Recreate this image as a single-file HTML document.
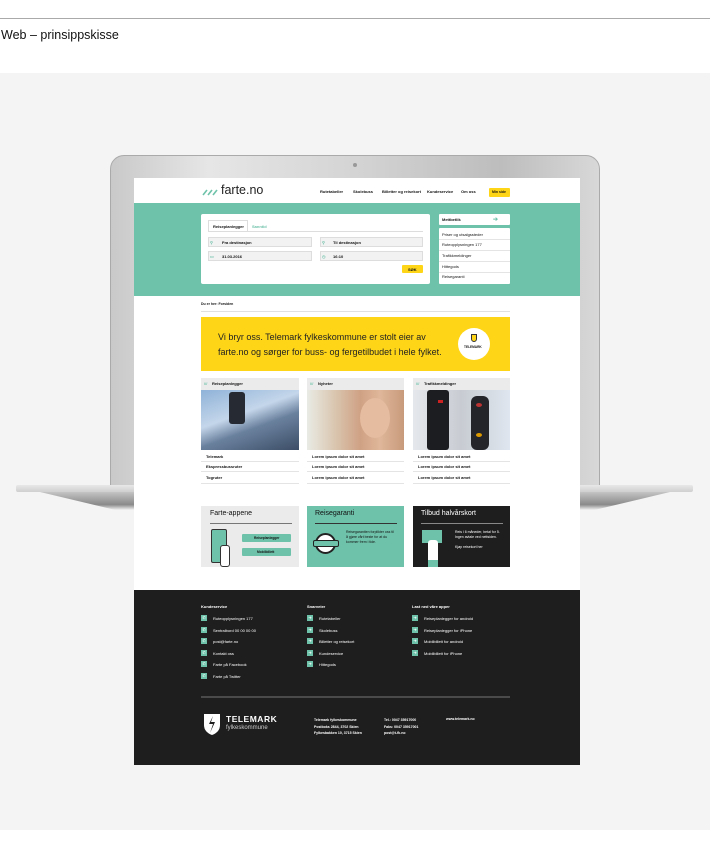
<!DOCTYPE html>
<html><head><meta charset="utf-8"><style>
*{margin:0;padding:0;box-sizing:border-box}
body{width:710px;height:850px;background:#fff;font-family:"Liberation Sans",sans-serif;position:relative;overflow:hidden;color:#111}
.a{position:absolute}
.t{font-size:4px;font-weight:bold;white-space:nowrap}
</style></head><body>
<div class="a" style="left:0;top:18px;width:710px;height:1px;background:#aaa"></div>
<div class="a" style="left:1px;top:28px;font-size:12.5px;color:#111">Web – prinsippskisse</div>
<div class="a" style="left:0;top:73px;width:710px;height:757px;background:#f4f4f4"></div>
<div class="a" style="left:110px;top:155px;width:490px;height:333px;border-radius:14px 14px 0 0;background:linear-gradient(90deg,#c9c9c9,#e6e6e6 20%,#d4d4d4 50%,#bdbdbd 80%,#d8d8d8);border:1px solid #aaa"></div>
<div class="a" style="left:353px;top:163px;width:4px;height:4px;border-radius:50%;background:#999"></div>
<div class="a" style="left:16px;top:485px;width:677px;height:7px;background:linear-gradient(#e8e8e8,#cfcfcf);border-radius:2px"></div>
<div class="a" style="left:40px;top:492px;width:630px;height:18px;background:linear-gradient(#c4c4c4,#8a8a8a 70%,#f4f4f4);clip-path:polygon(0 0,100% 0,88% 100%,12% 100%)"></div>
<div class="a" style="left:134px;top:178px;width:446px;height:587px;background:#fff"></div>
<svg class="a" style="left:202px;top:188px" width="18" height="8"><g stroke="#6fc2aa" stroke-width="1.6"><line x1="1" y1="7" x2="5" y2="2"/><line x1="6" y1="7" x2="10" y2="2"/><line x1="11" y1="7" x2="15" y2="2"/></g></svg>
<div class="a" style="left:221px;top:183px;font-size:12.5px;color:#222">farte.no</div>
<div class="a t" style="left:320px;top:189px">Rutetabeller</div>
<div class="a t" style="left:353px;top:189px">Skolebuss</div>
<div class="a t" style="left:382px;top:189px">Billetter og reisekort</div>
<div class="a t" style="left:427px;top:189px">Kundeservice</div>
<div class="a t" style="left:461px;top:189px">Om oss</div>
<div class="a" style="left:489px;top:188px;width:21px;height:9px;background:#ffd617;border-radius:1px"></div>
<div class="a t" style="left:492px;top:190px;font-size:3.5px">Min side</div>
<div class="a" style="left:134px;top:203px;width:446px;height:93px;background:#6fc2aa"></div>
<div class="a" style="left:201px;top:214px;width:229px;height:70px;background:#fff;border-radius:2px"></div>
<div class="a" style="left:208px;top:220px;width:40px;height:11px;border:1px solid #ddd;border-bottom:none;background:#fff"></div>
<div class="a t" style="left:213px;top:224px">Reiseplanlegger</div>
<div class="a t" style="left:252px;top:224px;color:#6fc2aa">Sanntid</div>
<div class="a" style="left:208px;top:231px;width:215px;height:1px;background:#ddd"></div>
<div class="a" style="left:208px;top:237px;width:104px;height:10px;background:#f2f2f2;border:1px solid #ddd"></div>
<div class="a" style="left:320px;top:237px;width:103px;height:10px;background:#f2f2f2;border:1px solid #ddd"></div>
<div class="a" style="left:208px;top:251px;width:104px;height:10px;background:#f2f2f2;border:1px solid #ddd"></div>
<div class="a" style="left:320px;top:251px;width:103px;height:10px;background:#f2f2f2;border:1px solid #ddd"></div>
<div class="a t" style="left:210px;top:240px;color:#6fc2aa">⚲</div><div class="a t" style="left:222px;top:240px">Fra destinasjon</div>
<div class="a t" style="left:322px;top:240px;color:#6fc2aa">⚲</div><div class="a t" style="left:333px;top:240px">Til destinasjon</div>
<div class="a t" style="left:210px;top:254px;color:#6fc2aa">▭</div><div class="a t" style="left:222px;top:254px">31.03.2016</div>
<div class="a t" style="left:322px;top:254px;color:#6fc2aa">◷</div><div class="a t" style="left:333px;top:254px">16:10</div>
<div class="a" style="left:402px;top:265px;width:21px;height:8px;background:#ffd617;border-radius:1px"></div>
<div class="a t" style="left:408px;top:267px">SØK</div>
<div class="a" style="left:439px;top:214px;width:71px;height:11px;background:#fff;border-radius:1px"></div>
<div class="a t" style="left:442px;top:217px">Mettbetlik</div>
<div class="a t" style="left:493px;top:216px;color:#6fc2aa;font-size:6px">➔</div>
<div class="a" style="left:439px;top:228px;width:71px;height:56px;background:#fff;border-radius:1px"></div>
<div class="a t" style="left:442px;top:232px;font-weight:normal">Priser og utsalgssteder</div>
<div class="a t" style="left:442px;top:242px;font-weight:normal">Ruteopplysningen 177</div>
<div class="a t" style="left:442px;top:253px;font-weight:normal">Trafikkmeldinger</div>
<div class="a t" style="left:442px;top:264px;font-weight:normal">Hittegods</div>
<div class="a t" style="left:442px;top:274px;font-weight:normal">Reisegaranti</div>
<div class="a" style="left:439px;top:239px;width:71px;height:1px;background:#e4e4e4"></div>
<div class="a" style="left:439px;top:250px;width:71px;height:1px;background:#e4e4e4"></div>
<div class="a" style="left:439px;top:261px;width:71px;height:1px;background:#e4e4e4"></div>
<div class="a" style="left:439px;top:272px;width:71px;height:1px;background:#e4e4e4"></div>
<div class="a t" style="left:201px;top:302px;font-size:3.5px">Du er her: Forsiden</div>
<div class="a" style="left:201px;top:311px;width:309px;height:1px;background:#e0e0e0"></div>
<div class="a" style="left:201px;top:317px;width:309px;height:54px;background:#ffd617"></div>
<div class="a" style="left:218px;top:330px;font-size:9px;line-height:15px;color:#222;white-space:nowrap">Vi bryr oss. Telemark fylkeskommune er stolt eier av<br>farte.no og sørger for buss- og fergetilbudet i hele fylket.</div>
<div class="a" style="left:458px;top:328px;width:32px;height:32px;border-radius:50%;background:#fff"></div>
<div class="a" style="left:471px;top:334px;width:6px;height:8px;background:#ffd617;border:1px solid #333;border-radius:0 0 3px 3px"></div>
<div class="a" style="left:464px;top:345px;font-size:3.2px;font-weight:bold">TELEMARK</div>
<div class="a" style="left:201px;top:378px;width:98px;height:12px;background:#ebebeb"></div>
<div class="a" style="left:307px;top:378px;width:97px;height:12px;background:#ebebeb"></div>
<div class="a" style="left:413px;top:378px;width:97px;height:12px;background:#ebebeb"></div>
<div class="a t" style="left:204px;top:381px;color:#6fc2aa">///</div><div class="a t" style="left:212px;top:381px">Reiseplanlegger</div>
<div class="a t" style="left:310px;top:381px;color:#6fc2aa">///</div><div class="a t" style="left:318px;top:381px">Nyheter</div>
<div class="a t" style="left:416px;top:381px;color:#6fc2aa">///</div><div class="a t" style="left:424px;top:381px">Trafikkmeldinger</div>
<div class="a" style="left:201px;top:390px;width:98px;height:60px;background:linear-gradient(160deg,#8fb2d8,#c4d6ea 40%,#6a819e 60%,#3c4d66)"></div>
<div class="a" style="left:229px;top:392px;width:16px;height:32px;background:#252a33;border-radius:3px"></div>
<div class="a" style="left:307px;top:390px;width:97px;height:60px;background:linear-gradient(90deg,#e9ebe5,#d9c4ad 30%,#cfa184 55%,#e0b79a 75%,#c79a7b)"></div>
<div class="a" style="left:360px;top:398px;width:30px;height:40px;border-radius:50%;background:#e5bca0"></div>
<div class="a" style="left:413px;top:390px;width:97px;height:60px;background:linear-gradient(90deg,#e5e8ec,#c8ccd2 50%,#dfe6ef)"></div>
<div class="a" style="left:427px;top:390px;width:22px;height:60px;background:#1c1d20;border-radius:3px"></div>
<div class="a" style="left:471px;top:396px;width:18px;height:54px;background:#23252a;border-radius:6px"></div>
<div class="a" style="left:438px;top:400px;width:5px;height:3px;background:#c22"></div>
<div class="a" style="left:476px;top:403px;width:6px;height:4px;background:#b33;border-radius:50%"></div>
<div class="a" style="left:476px;top:433px;width:6px;height:4px;background:#d90;border-radius:50%"></div>
<div class="a t" style="left:206px;top:454px">Telemark</div>
<div class="a t" style="left:206px;top:464px">Ekspressbussruter</div>
<div class="a t" style="left:206px;top:475px">Togruter</div>
<div class="a t" style="left:312px;top:454px">Lorem ipsum dolor sit amet</div>
<div class="a t" style="left:312px;top:464px">Lorem ipsum dolor sit amet</div>
<div class="a t" style="left:312px;top:475px">Lorem ipsum dolor sit amet</div>
<div class="a t" style="left:418px;top:454px">Lorem ipsum dolor sit amet</div>
<div class="a t" style="left:418px;top:464px">Lorem ipsum dolor sit amet</div>
<div class="a t" style="left:418px;top:475px">Lorem ipsum dolor sit amet</div>
<div class="a" style="left:201px;top:461px;width:98px;height:1px;background:#e4e4e4"></div>
<div class="a" style="left:201px;top:471px;width:98px;height:1px;background:#e4e4e4"></div>
<div class="a" style="left:201px;top:483px;width:98px;height:1px;background:#e4e4e4"></div>
<div class="a" style="left:307px;top:461px;width:97px;height:1px;background:#e4e4e4"></div>
<div class="a" style="left:307px;top:471px;width:97px;height:1px;background:#e4e4e4"></div>
<div class="a" style="left:307px;top:483px;width:97px;height:1px;background:#e4e4e4"></div>
<div class="a" style="left:413px;top:461px;width:97px;height:1px;background:#e4e4e4"></div>
<div class="a" style="left:413px;top:471px;width:97px;height:1px;background:#e4e4e4"></div>
<div class="a" style="left:413px;top:483px;width:97px;height:1px;background:#e4e4e4"></div>
<div class="a" style="left:201px;top:506px;width:98px;height:61px;background:#ebebeb"></div>
<div class="a" style="left:307px;top:506px;width:97px;height:61px;background:#6fc2aa"></div>
<div class="a" style="left:413px;top:506px;width:97px;height:61px;background:#1e1e1e"></div>
<div class="a" style="left:210px;top:510px;font-size:7px">Farte-appene</div>
<div class="a" style="left:315px;top:510px;font-size:7px">Reisegaranti</div>
<div class="a" style="left:421px;top:510px;font-size:7px;color:#fff">Tilbud halvårskort</div>
<div class="a" style="left:210px;top:523px;width:82px;height:1px;background:#777"></div>
<div class="a" style="left:315px;top:523px;width:82px;height:1px;background:#333"></div>
<div class="a" style="left:421px;top:523px;width:82px;height:1px;background:#888"></div>
<div class="a" style="left:211px;top:529px;width:16px;height:34px;border:1px solid #333;border-radius:2px;background:#6fc2aa"></div>
<div class="a" style="left:220px;top:545px;width:10px;height:22px;background:#fff;border:1px solid #333;border-radius:3px"></div>
<div class="a" style="left:242px;top:534px;width:49px;height:8px;background:#6fc2aa;border-radius:1px"></div>
<div class="a" style="left:242px;top:548px;width:49px;height:8px;background:#6fc2aa;border-radius:1px"></div>
<div class="a t" style="left:254px;top:536px;font-size:3.3px">Reiseplanlegger</div>
<div class="a t" style="left:257px;top:550px;font-size:3.3px">Mobilbillett</div>
<div class="a" style="left:315px;top:533px;width:21px;height:21px;border-radius:50%;border:2px solid #222;background:#fff"></div>
<div class="a" style="left:313px;top:540px;width:26px;height:7px;background:#6fc2aa;border:1.5px solid #222;border-radius:2px"></div>
<div class="a" style="left:346px;top:530px;font-size:3.5px;line-height:5px;width:48px">Reisegarantien forplikter oss til å gjøre vårt beste for at du kommer frem i tide.</div>
<div class="a" style="left:422px;top:530px;width:20px;height:13px;background:#6fc2aa"></div>
<div class="a" style="left:428px;top:540px;width:10px;height:20px;background:#fff;border-radius:3px 3px 0 0"></div>
<div class="a" style="left:428px;top:560px;width:10px;height:7px;background:#6fc2aa"></div>
<div class="a" style="left:455px;top:530px;font-size:3.5px;line-height:5px;width:48px;color:#fff">Reis i 6 måneder, betal for 5. Ingen avtale ved nettsiden.<br><br>Kjøp reisekort her</div>
<div class="a" style="left:134px;top:590px;width:446px;height:175px;background:#1e1e1e"></div>
<div class="a t" style="left:201px;top:604px;color:#fff">Kundeservice</div>
<div class="a t" style="left:307px;top:604px;color:#fff">Snarveier</div>
<div class="a t" style="left:412px;top:604px;color:#fff">Last ned våre apper</div>
<div id="f"></div>
<div class="a" style="left:201px;top:696px;width:309px;height:2px;background:#4a4a4a"></div>
<svg class="a" style="left:202px;top:713px" width="20" height="23"><path d="M2 1 L18 1 L18 12 Q18 19 10 22 Q2 19 2 12 Z" fill="#fff"/><path d="M11 3 L7 11 L11 11 L8 20 L13 9 L9 9 Z" fill="#1e1e1e"/></svg>
<div class="a" style="left:226px;top:714px;font-size:8.5px;color:#fff;font-weight:bold;letter-spacing:.5px">TELEMARK</div>
<div class="a" style="left:226px;top:725px;font-size:6px;color:#ccc">fylkeskommune</div>
<div class="a t" style="left:314px;top:717px;color:#fff;line-height:6.5px;font-size:3.5px">Telemark fylkeskommune<br>Postboks 2844, 3702 Skien<br>Fylkesbakken 10, 3715 Skien</div>
<div class="a t" style="left:384px;top:717px;color:#fff;line-height:6.5px;font-size:3.5px">Tel.: 0047 35917000<br>Faks: 0047 35917001<br>post@t-fk.no</div>
<div class="a t" style="left:446px;top:717px;color:#fff;font-size:3.5px">www.telemark.no</div>
<script>
var f=document.getElementById('f'),h='';
function col(x,items,icon){items.forEach(function(s,i){var y=615+i*11.5;h+='<div class="a" style="left:'+x+'px;top:'+y+'px;width:6px;height:6px;background:#6fc2aa;color:#fff;font-size:4px;text-align:center;line-height:6px">'+icon+'</div><div class="a t" style="left:'+(x+12)+'px;top:'+(y+1)+'px;color:#fff;font-weight:normal">'+s+'</div>';});}
col(201,['Ruteopplysningen 177','Sentralbord 00 00 00 00','post@farte.no','Kontakt oss','Farte på Facebook','Farte på Twitter'],'✆');
col(307,['Rutetabeller','Skolebuss','Billetter og reisekort','Kundeservice','Hittegods'],'➔');
col(412,['Reiseplanlegger for android','Reiseplanlegger for iPhone','Mobilbillett for android','Mobilbillett for iPhone'],'➔');
f.innerHTML=h;
</script>
</body></html>
